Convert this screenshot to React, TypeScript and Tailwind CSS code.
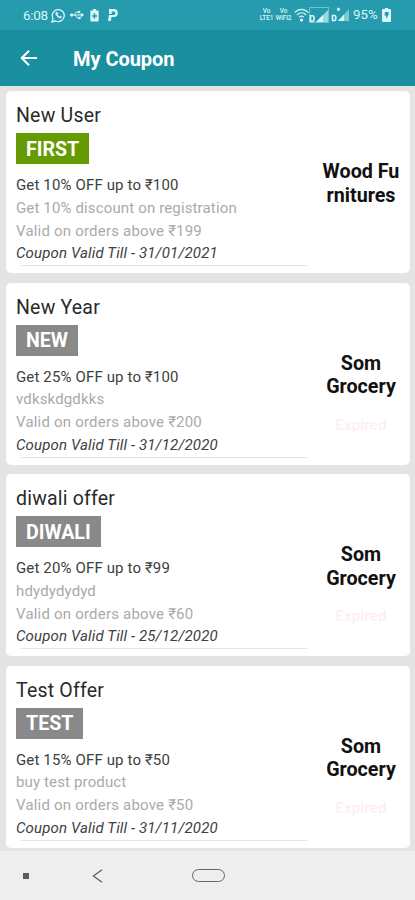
type Coupon = {
  title: string;
  code: string;
  active?: boolean;
  offer: string;
  detail: string;
  minimum: string;
  until: string;
  store: [string, string];
};

const coupons: Coupon[] = [
  { title: "New User", code: "FIRST", active: true, offer: "Get 10% OFF up to ₹100", detail: "Get 10% discount on registration", minimum: "Valid on orders above ₹199", until: "31/01/2021", store: ["Wood Fu", "rnitures"] },
  { title: "New Year", code: "NEW", offer: "Get 25% OFF up to ₹100", detail: "vdkskdgdkks", minimum: "Valid on orders above ₹200", until: "31/12/2020", store: ["Som", "Grocery"] },
  { title: "diwali offer", code: "DIWALI", offer: "Get 20% OFF up to ₹99", detail: "hdydydydyd", minimum: "Valid on orders above ₹60", until: "25/12/2020", store: ["Som", "Grocery"] },
  { title: "Test Offer", code: "TEST", offer: "Get 15% OFF up to ₹50", detail: "buy test product", minimum: "Valid on orders above ₹50", until: "31/11/2020", store: ["Som", "Grocery"] },
];

function StatusBar() {
  return (
    <div className="flex h-[30px] items-center bg-[#259bad] pl-[23px] pr-[24px] text-[14px] text-[#d9f6fa]">
      <span className="w-[28px] whitespace-nowrap text-[13.5px] tracking-[-0.3px]">6:08</span>
      <svg className="h-[15px] w-[15px]" viewBox="0 0 15 15" fill="none" stroke="currentColor" strokeWidth="1.3">
        <path d="M1 14l1-3.500A6 6 0 1 1 4.600 13L1 14z" />
        <path d="M5 4.200c-1 1-.2 2.800 1.200 4.200s3.300 2.300 4.300 1.200l.2-.9-1.600-.8-.8.7C7.200 8 6.700 7.300 6.300 6.500l.6-.7-.7-1.600H5z" fill="currentColor" strokeWidth=".4" />
      </svg>
      <svg className="ml-[4px] h-[12px] w-[14px]" viewBox="0 0 14 12" fill="none" stroke="currentColor" strokeWidth="1">
        <circle cx="1.700" cy="6" r="1.200" fill="currentColor" />
        <path d="M2 6h10M4 6l2.500-3H8M5 6l2.500 3H9" />
        <path d="M11 4l3 2-3 2zM8 2h2v2H8zM8.500 8h2v2h-2z" fill="currentColor" strokeWidth=".3" />
      </svg>
      <svg className="ml-[6px] h-[13px] w-[9px]" viewBox="0 0 9 14" fill="currentColor">
        <path fillRule="evenodd" d="M3 0h3v1.500h2q1 0 1 1v10q0 1-1 1H1q-1 0-1-1v-10q0-1 1-1h2zM3.700 4.500v2.200H1.800v1.600h1.900v2.200h1.600V8.300h1.900V6.700H5.300V4.500z" />
      </svg>
      <svg className="ml-[9px] h-[12px] w-[10px]" viewBox="0 0 10 12" fill="currentColor">
        <path fillRule="evenodd" d="M1 0h4.800a4 4 0 0 1 0 8H3.500l-.8 4H0L1 6h4.700a1.700 1.700 0 0 0 0-3.500H3.900L3.600 5H1z" />
      </svg>
      <div className="ml-auto flex items-center">
        <div className="flex w-[15px] flex-col items-center text-[6.5px] font-medium leading-[7px] tracking-[-0.1px]">
          <span>Vo</span>
          <span>LTE1</span>
        </div>
        <div className="ml-px flex w-[17px] flex-col items-center text-[6.5px] font-medium leading-[7px] tracking-[-0.1px]">
          <span>Vo</span>
          <span>WiFi2</span>
        </div>
        <svg className="ml-[2px] h-[14px] w-[15px]" viewBox="0 0 15 14" fill="none" stroke="currentColor" strokeWidth="1.200">
          <path d="M.8 4.500c4-4.300 9.400-4.300 13.400 0M3 7c2.700-3 6.300-3 9 0M5.200 9.300c1.400-1.500 3.200-1.500 4.600 0" />
          <circle cx="7.500" cy="12" r="1" fill="currentColor" />
        </svg>
        <svg className="h-[16px] w-[20px]" viewBox="0 0 20 16" fill="none" stroke="currentColor">
          <path d="M.5.500h19v15H.5z" strokeWidth=".8" opacity=".55" />
          <path d="M7 15L19 3v12z" fill="currentColor" stroke="none" opacity=".65" />
          <path d="M7 15l7-7v7z" fill="currentColor" stroke="none" />
          <path d="M1.500 8.700h2q1.500 0 1.500 2v1.500q0 2-1.500 2h-2z" strokeWidth="1.600" />
        </svg>
        <svg className="ml-[2px] h-[16px] w-[19px]" viewBox="0 0 19 16" fill="none" stroke="currentColor">
          <path d="M7 14L18 2v12z" fill="currentColor" stroke="none" opacity=".5" />
          <path d="M7 14l6-6.500V14z" fill="currentColor" stroke="none" />
          <path d="M1.500 8.500h2q1.300 0 1.300 2v1q0 2-1.300 2h-2z" strokeWidth="1.600" />
          <path d="M6.500 1h2v2.500h-2z" fill="currentColor" strokeWidth=".5" />
        </svg>
        <span className="ml-[3px] w-[26px] whitespace-nowrap text-[13.3px]">95%</span>
        <svg className="ml-[3px] h-[14px] w-[9px]" viewBox="0 0 9 14" fill="currentColor">
          <path fillRule="evenodd" d="M3 0h3v1h2q1 0 1 1v11q0 1-1 1H1q-1 0-1-1V2q0-1 1-1h2zM3 4L2.500 7.500h1.700V11L6.500 7V4z" />
        </svg>
      </div>
    </div>
  );
}

function CouponCard({ coupon }: { coupon: Coupon }) {
  return (
    <article className="flex h-[182px] rounded-[5px] bg-white">
      <div className="flex w-[301px] flex-col items-start whitespace-nowrap pl-[10px] pt-[13px]">
        <h2 className="h-[29px] text-[19.5px] leading-[23px] tracking-[0.2px] text-[#2a2a2a]">{coupon.title}</h2>
        <span className={`flex h-[31px] items-center px-[10px] pt-[2px] text-[19.6px] font-bold text-white ${coupon.active ? "bg-[#639b00]" : "bg-[#898989]"}`}>
          {coupon.code}
        </span>
        <div className="mt-[10px] text-[15px] leading-[22.8px] tracking-[0.14px]">
          <p className="text-[#404040]">{coupon.offer}</p>
          <p className="text-[#aaaaaa]">{coupon.detail}</p>
          <p className="tracking-[0.2px] text-[#aaaaaa]">{coupon.minimum}</p>
          <p className="italic text-[#404040]">Coupon Valid Till - {coupon.until}</p>
        </div>
        <div className="ml-[5px] h-px w-[286px] bg-[#e4e4e4]" />
      </div>
      <div className="flex flex-1 flex-col items-center pl-[5px] pt-[69px] text-center text-[19.7px] font-bold leading-[23.500px] text-[#111]">
        <p className="whitespace-nowrap">{coupon.store[0]}</p>
        <p>{coupon.store[1]}</p>
        {!coupon.active && <p className="mt-[15px] text-[15px] font-medium leading-[23px] tracking-[0.25px] text-[#ffeeee]">Expired</p>}
      </div>
    </article>
  );
}

export default function App() {
  return (
    <div className="flex h-[900px] w-[415px] flex-col overflow-hidden bg-[#e4e4e2] font-[Roboto,sans-serif]">
      <StatusBar />
      <header className="flex h-[56px] shrink-0 items-center bg-[#198fa0] pl-[20px] text-white">
        <svg className="h-[18px] w-[18px]" viewBox="0 0 18 18" fill="none" stroke="currentColor" strokeWidth="2">
          <path d="M17 9H2M9 1.700L1.700 9 9 16.300" />
        </svg>
        <h1 className="ml-[35px] pt-[2px] text-[20px] font-bold tracking-[-0.05px]">My Coupon</h1>
      </header>
      <main className="flex h-[765px] shrink-0 flex-col gap-[9.500px] pl-[6px] pr-[5px] pt-[5px]">
        {coupons.map((coupon) => <CouponCard key={coupon.title} coupon={coupon} />)}
      </main>
      <nav className="flex h-[49px] shrink-0 items-center bg-[#eeeeee] pl-[23px] text-[#666]">
        <div className="h-[6px] w-[6px] bg-[#5c5c5c]" />
        <svg className="ml-[63px] h-[14px] w-[11px]" viewBox="0 0 11 14" fill="none" stroke="currentColor" strokeWidth="1.400">
          <path d="M10 .7L1.500 7l8.500 6.300" />
        </svg>
        <div className="ml-[89px] h-[13px] w-[33px] rounded-full border-[1.500px] border-[#666]" />
      </nav>
    </div>
  );
}
